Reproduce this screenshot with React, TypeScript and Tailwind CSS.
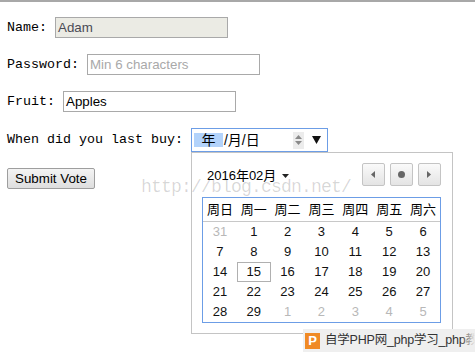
import React from "react";

const mono = { fontFamily: '"Liberation Mono", "Noto Sans CJK SC", monospace' };
const sans = { fontFamily: '"Liberation Sans", "Noto Sans CJK SC", sans-serif' };

const weekdays = ["周日", "周一", "周二", "周三", "周四", "周五", "周六"];
type Day = { n: number; other?: boolean; today?: boolean };
const days: Day[] = [
  { n: 31, other: true },
  ...Array.from({ length: 29 }, (_, i) => ({ n: i + 1, today: i + 1 === 15 })),
  { n: 1, other: true },
  { n: 2, other: true },
  { n: 3, other: true },
  { n: 4, other: true },
  { n: 5, other: true },
];

function NavBtn({ children }: { children: React.ReactNode }) {
  return (
    <div className="w-[23px] h-[23px] rounded-[2px] border border-[#c4c4c4] bg-gradient-to-b from-[#fafafa] to-[#e4e4e4] flex items-center justify-center">
      {children}
    </div>
  );
}

export default function App() {
  return (
    <div className="relative w-[475px] h-[354px] bg-white overflow-hidden text-black" style={mono}>
      <div className="h-[2px] bg-[#a8a8a8]" />
      <div className="pl-[7px] pt-[15px] flex flex-col text-[13.33px]">
        <div className="flex items-center h-[21px]">
          <span className="whitespace-pre">Name: </span>
          <div className="w-[173px] h-[21px] border border-[#a9a9a9] bg-[#ebebe4] px-[2px] flex items-center text-[#4a4a55]" style={sans}>
            Adam
          </div>
        </div>
        <div className="flex items-center h-[21px] mt-[16px]">
          <span className="whitespace-pre">Password: </span>
          <div className="w-[173px] h-[21px] border border-[#a9a9a9] bg-white px-[2px] flex items-center text-[#a9a9a9]" style={sans}>
            Min 6 characters
          </div>
        </div>
        <div className="flex items-center h-[21px] mt-[16px]">
          <span className="whitespace-pre">Fruit: </span>
          <div className="w-[173px] h-[21px] border border-[#a9a9a9] bg-white px-[2px] flex items-center" style={sans}>
            Apples
          </div>
        </div>
        <div className="flex items-center h-[24px] mt-[16px]">
          <span className="whitespace-pre">When did you last buy: </span>
          <div className="relative">
            <div className="w-[137px] h-[24px] border border-[#6c9de6] bg-white flex items-center pl-[2px] text-[14px]" style={sans}>
              <span className="w-[29px] h-[14px] bg-[#b3d3fb] flex items-center justify-center leading-none">年</span>
              <span className="leading-none ml-[1px]">/月/日</span>
              <div className="ml-auto mr-[23px] w-[11px] h-[17px] bg-[#ececec] flex flex-col items-center justify-center gap-[2px]">
                <svg width="7" height="4" viewBox="0 0 7 4"><path d="M0 4 L3.5 0 L7 4 Z" fill="#8a8a8a" /></svg>
                <svg width="7" height="4" viewBox="0 0 7 4"><path d="M0 0 L7 0 L3.5 4 Z" fill="#8a8a8a" /></svg>
              </div>
              <svg className="absolute right-[7px] top-[8px]" width="9" height="8" viewBox="0 0 9 8"><path d="M0 0 L9 0 L4.5 8 Z" fill="#111" /></svg>
            </div>
            <div className="absolute left-0 top-full w-[262px] h-[182px] border border-[#c4c4c4] bg-white z-10 px-[10px] pt-[10px]" style={sans}>
              <div className="flex items-center justify-between h-[23px]">
                <div className="flex items-center pl-[5px] pt-[2px] text-[13px]">
                  <span>2016年02月</span>
                  <svg className="ml-[6px]" width="7" height="4" viewBox="0 0 7 4"><path d="M0 0 L7 0 L3.5 4 Z" fill="#222" /></svg>
                </div>
                <div className="flex gap-[5px] mr-[1px]">
                  <NavBtn>
                    <svg width="4" height="7" viewBox="0 0 4 7"><path d="M4 0 L0 3.5 L4 7 Z" fill="#666" /></svg>
                  </NavBtn>
                  <NavBtn>
                    <div className="w-[7px] h-[7px] rounded-full bg-[#666]" />
                  </NavBtn>
                  <NavBtn>
                    <svg width="4" height="7" viewBox="0 0 4 7"><path d="M0 0 L4 3.5 L0 7 Z" fill="#666" /></svg>
                  </NavBtn>
                </div>
              </div>
              <div className="mt-[11px] w-[239px] border border-[#6c9de6]">
                <div className="grid grid-cols-7 h-[24px] border-b border-[#c8c8c8] text-[13px]">
                  {weekdays.map((w) => (
                    <div key={w} className="flex items-center justify-center">{w}</div>
                  ))}
                </div>
                <div className="grid grid-cols-7 text-[13px]">
                  {days.map((d, i) => (
                    <div
                      key={i}
                      className={
                        "h-[20px] flex items-center justify-center " +
                        (d.other ? "text-[#b8b8b8] " : "text-[#111] ") +
                        (d.today ? "border border-[#b0b0b0]" : "")
                      }
                    >
                      {d.n}
                    </div>
                  ))}
                </div>
              </div>
            </div>
          </div>
        </div>
        <div className="mt-[16px] flex">
          <button
            className="w-[88px] h-[21px] border border-[#9e9e9e] rounded-[2px] bg-gradient-to-b from-[#f4f4f4] to-[#dedede] text-[13.33px] flex items-center justify-center"
            style={sans}
          >
            Submit Vote
          </button>
        </div>
      </div>

      <div
        className="absolute left-[141px] top-[177px] text-[18px] leading-[20px] tracking-[-0.8px] text-[rgba(0,0,0,0.16)] pointer-events-none z-20 whitespace-pre"
        style={mono}
      >
        http://blog.csdn.net/
      </div>

      <div className="absolute left-[303px] top-[329px] w-[172px] h-[23px] bg-[#efefef] flex items-center pl-[2px] overflow-hidden z-20" style={sans}>
        <div className="w-[15px] h-[16px] bg-[#f08a24] flex items-center justify-center text-white text-[13px] font-bold leading-none shrink-0">P</div>
        <span className="ml-[5px] text-[12.5px] tracking-[-0.2px] text-[#333] whitespace-nowrap">自学PHP网_php学习_php教程</span>
        <div className="absolute right-0 top-0 h-full w-[14px] bg-gradient-to-r from-transparent to-[#efefef]" />
      </div>
    </div>
  );
}
